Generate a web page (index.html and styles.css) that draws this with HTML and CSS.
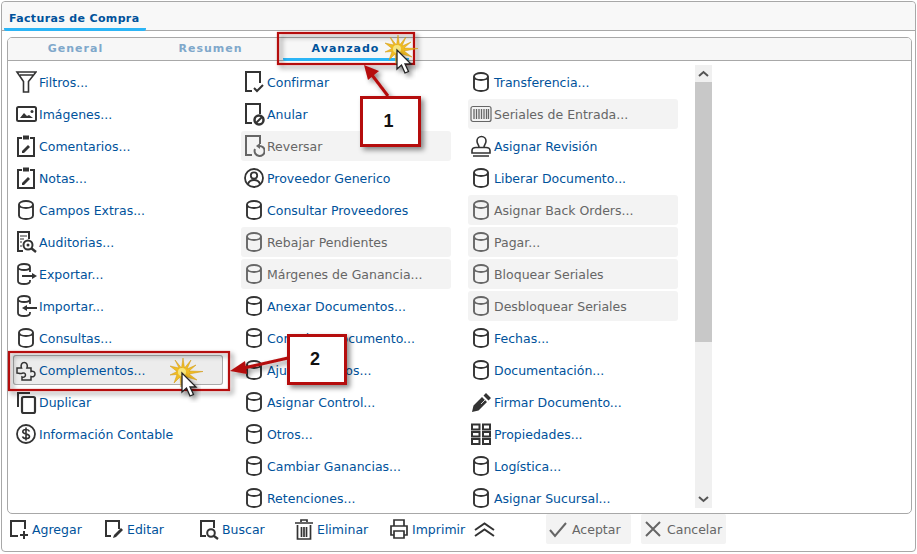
FILE: index.html
```html
<!DOCTYPE html>
<html lang="es">
<head>
<meta charset="utf-8">
<title>Facturas de Compra</title>
<link rel="stylesheet" href="styles.css">
</head>
<body>
<svg class="defs" width="0" height="0" aria-hidden="true">
  <defs>
    <symbol id="db" viewBox="0 0 16 20"><path d="M1 4.500C1 2.500 4 1 8 1s7 1.500 7 3.500v11c0 2-3 3.500-7 3.500s-7-1.500-7-3.500zM1 4.500c0 2 3 3.500 7 3.500s7-1.500 7-3.500" fill="none" stroke="currentColor" stroke-width="1.900"/></symbol>
  </defs>
</svg>
<div class="window">
  <div class="head"><div class="head-tab">Facturas de Compra</div></div>
  <div class="body">
    <div class="panel">
      <div class="tabs">
        <div class="tab">General</div>
        <div class="tab">Resumen</div>
        <div class="tab active">Avanzado</div>
      </div>
      <div class="content">
        <div class="list">
          <div class="col">
            <a class="item"><svg class="ic" viewBox="0 0 22 24"><path d="M2 2h19l-7.500 9.500V22h-5V11.500zM5 5h13" fill="none" stroke="currentColor" stroke-width="1.600"/></svg><span>Filtros...</span></a>
            <a class="item"><svg class="ic" viewBox="0 0 22 24"><rect x="2" y="5" width="19" height="14" rx="1.500" fill="none" stroke="currentColor" stroke-width="2"/><path d="M5 16l4-5 3 3 2-1 4 3z" fill="currentColor"/><circle cx="17" cy="9.500" r="1.500" fill="currentColor"/></svg><span>Imágenes...</span></a>
            <a class="item"><svg class="ic" viewBox="0 0 22 24"><path d="M7 4H3v18h16V4h-4" fill="none" stroke="currentColor" stroke-width="2"/><rect x="8" y="1.500" width="6" height="4" fill="currentColor"/><path d="M7 17l6-6 2 2-6 6H7z" fill="currentColor"/></svg><span>Comentarios...</span></a>
            <a class="item"><svg class="ic" viewBox="0 0 22 24"><path d="M7 4H3v18h16V4h-4" fill="none" stroke="currentColor" stroke-width="2"/><rect x="8" y="1.500" width="6" height="4" fill="currentColor"/><path d="M7 17l6-6 2 2-6 6H7z" fill="currentColor"/></svg><span>Notas...</span></a>
            <a class="item"><svg class="ic db"><use href="#db"/></svg><span>Campos Extras...</span></a>
            <a class="item"><svg class="ic" viewBox="0 0 22 24"><path d="M8 21H3V2h11v7" fill="none" stroke="currentColor" stroke-width="2"/><path d="M5 6h7M5 9h4M5 12h2M5 16h2" stroke="currentColor" stroke-width="1.200"/><circle cx="13" cy="15" r="4.500" fill="none" stroke="currentColor" stroke-width="2"/><circle cx="13" cy="15" r="1.500" fill="currentColor"/><path d="M16 18l5 4" stroke="currentColor" stroke-width="2.400"/></svg><span>Auditorias...</span></a>
            <a class="item"><svg class="ic" viewBox="0 0 22 24"><path d="M3 5c0-2 2.500-3 6-3s6 1 6 3c0 2-2.500 3-6 3S3 7 3 5zM3 5v14c0 2 2.500 3 6 3s6-1 6-3v-1M15 5v5" fill="none" stroke="currentColor" stroke-width="1.800"/><path d="M7 14h12" stroke="currentColor" stroke-width="2"/><path d="M17 11l5 3-5 3z" fill="currentColor"/></svg><span>Exportar...</span></a>
            <a class="item"><svg class="ic" viewBox="0 0 22 24"><path d="M3 5c0-2 2.500-3 6-3s6 1 6 3c0 2-2.500 3-6 3S3 7 3 5zM3 5v14c0 2 2.500 3 6 3s6-1 6-3v-1M15 5v5" fill="none" stroke="currentColor" stroke-width="1.800"/><path d="M10 14h12" stroke="currentColor" stroke-width="2"/><path d="M12 11l-5 3 5 3z" fill="currentColor"/></svg><span>Importar...</span></a>
            <a class="item"><svg class="ic db"><use href="#db"/></svg><span>Consultas...</span></a>
            <a class="item hover"><svg class="ic" viewBox="0 0 22 24"><path d="M2 10h4.500c-1.200-3 .3-5.500 2.700-5.500s3.900 2.500 2.700 5.500H16v3.500c2.200-.8 4 .5 4 2.500s-1.800 3.300-4 2.500V22H7v-3c1.800.8 3.500-.3 3.500-2S8.800 14.500 7 15.200c-2 .5-3 0-5-.2z" fill="none" stroke="currentColor" stroke-width="1.500"/></svg><span>Complementos...</span></a>
            <a class="item"><svg class="ic" viewBox="0 0 22 24"><path d="M3 17V3h12" fill="none" stroke="currentColor" stroke-width="2"/><rect x="7" y="7" width="13" height="16" rx="1.500" fill="none" stroke="currentColor" stroke-width="2.200"/></svg><span>Duplicar</span></a>
            <a class="item"><svg class="ic" viewBox="0 0 22 24"><circle cx="11" cy="12" r="9" fill="none" stroke="currentColor" stroke-width="1.800"/><path d="M14.500 9.500c-.5-1.300-2-2-3.500-2-2 0-3.200 1-3.200 2.200C7.800 12.800 14.500 11.200 14.500 14.400 14.500 15.800 13 16.500 11 16.500c-1.500 0-3-.5-3.500-2M11 5.500v13" fill="none" stroke="currentColor" stroke-width="1.600"/></svg><span>Información Contable</span></a>
          </div>
          <div class="col">
            <a class="item"><svg class="ic" viewBox="0 0 22 24"><path d="M9 21H3V2h14v11" fill="none" stroke="currentColor" stroke-width="2"/><path d="M11 18l3 3 6-6" fill="none" stroke="currentColor" stroke-width="2"/></svg><span>Confirmar</span></a>
            <a class="item"><svg class="ic" viewBox="0 0 22 24"><path d="M9 21H3V2h14v10" fill="none" stroke="currentColor" stroke-width="2"/><circle cx="16" cy="18" r="4.500" fill="none" stroke="currentColor" stroke-width="2.500"/><path d="M13 21l6-6" stroke="currentColor" stroke-width="2"/></svg><span>Anular</span></a>
            <a class="item off"><svg class="ic" viewBox="0 0 22 24"><path d="M9 21H3V2h14v8" fill="none" stroke="currentColor" stroke-width="2"/><path d="M12 15a5 5 0 1 0 4-3" fill="none" stroke="currentColor" stroke-width="2"/><path d="M17 9v6l-4-3z" fill="currentColor"/></svg><span>Reversar</span></a>
            <a class="item"><svg class="ic" viewBox="0 0 22 24"><circle cx="11" cy="12" r="9" fill="none" stroke="currentColor" stroke-width="1.800"/><circle cx="11" cy="9.500" r="3.200" fill="none" stroke="currentColor" stroke-width="1.800"/><path d="M5 18c1-3 3-4 6-4s5 1 6 4" fill="none" stroke="currentColor" stroke-width="1.800"/></svg><span>Proveedor Generico</span></a>
            <a class="item"><svg class="ic db"><use href="#db"/></svg><span>Consultar Proveedores</span></a>
            <a class="item off"><svg class="ic db"><use href="#db"/></svg><span>Rebajar Pendientes</span></a>
            <a class="item off"><svg class="ic db"><use href="#db"/></svg><span>Márgenes de Ganancia...</span></a>
            <a class="item"><svg class="ic db"><use href="#db"/></svg><span>Anexar Documentos...</span></a>
            <a class="item"><svg class="ic db"><use href="#db"/></svg><span>Consultar Documento...</span></a>
            <a class="item"><svg class="ic db"><use href="#db"/></svg><span>Ajustar Precios...</span></a>
            <a class="item"><svg class="ic db"><use href="#db"/></svg><span>Asignar Control...</span></a>
            <a class="item"><svg class="ic db"><use href="#db"/></svg><span>Otros...</span></a>
            <a class="item"><svg class="ic db"><use href="#db"/></svg><span>Cambiar Ganancias...</span></a>
            <a class="item"><svg class="ic db"><use href="#db"/></svg><span>Retenciones...</span></a>
          </div>
          <div class="col">
            <a class="item"><svg class="ic db"><use href="#db"/></svg><span>Transferencia...</span></a>
            <a class="item off"><svg class="ic" viewBox="0 0 22 24"><rect x="1" y="4.500" width="20" height="15" rx="2" fill="none" stroke="currentColor" stroke-width="1.200"/><path d="M4 7v10M6.500 7v10M9 7v10M11.500 7v10M14 7v10M16.500 7v10M18.500 7v10" stroke="currentColor" stroke-width="1.300"/></svg><span>Seriales de Entrada...</span></a>
            <a class="item"><svg class="ic" viewBox="0 0 22 24"><path d="M9 13c0-2-2-3-2-6a4.500 4.500 0 0 1 9 0c0 3-2 4-2 6M2 16.500c0-2 2-3 4-3h10c2 0 4 1 4 3V19H2zM3 22h16" fill="none" stroke="currentColor" stroke-width="1.600"/></svg><span>Asignar Revisión</span></a>
            <a class="item"><svg class="ic db"><use href="#db"/></svg><span>Liberar Documento...</span></a>
            <a class="item off"><svg class="ic db"><use href="#db"/></svg><span>Asignar Back Orders...</span></a>
            <a class="item off"><svg class="ic db"><use href="#db"/></svg><span>Pagar...</span></a>
            <a class="item off"><svg class="ic db"><use href="#db"/></svg><span>Bloquear Seriales</span></a>
            <a class="item off"><svg class="ic db"><use href="#db"/></svg><span>Desbloquear Seriales</span></a>
            <a class="item"><svg class="ic db"><use href="#db"/></svg><span>Fechas...</span></a>
            <a class="item"><svg class="ic db"><use href="#db"/></svg><span>Documentación...</span></a>
            <a class="item"><svg class="ic" viewBox="0 0 22 24"><path d="M2 22l1.500-6.500L12 7l5 5-8.500 8.500zM13.500 5.500L16 3l5 5-2.500 2.500z" fill="currentColor"/><path d="M16 9l-5 5" stroke="#fff" stroke-width=".8"/></svg><span>Firmar Documento...</span></a>
            <a class="item"><svg class="ic" viewBox="0 0 22 24"><path d="M2 2.500h7.500v5H2zM13 2.500h7v5h-7zM2 10h7.500v4.500H2zM13 10h7v4.500h-7zM2 17h7.500v5H2zM13 17h7v5h-7z" fill="none" stroke="currentColor" stroke-width="2"/></svg><span>Propiedades...</span></a>
            <a class="item"><svg class="ic db"><use href="#db"/></svg><span>Logística...</span></a>
            <a class="item"><svg class="ic db"><use href="#db"/></svg><span>Asignar Sucursal...</span></a>
          </div>
        </div>
        <div class="scrollbar">
          <div class="sb-btn"><svg width="11" height="7" viewBox="0 0 11 7"><path d="M1 6l4.500-4L10 6" fill="none" stroke="#555" stroke-width="2"/></svg></div>
          <div class="sb-thumb"></div>
          <div class="sb-track"></div>
          <div class="sb-btn"><svg width="11" height="7" viewBox="0 0 11 7"><path d="M1 1l4.500 4L10 1" fill="none" stroke="#555" stroke-width="2"/></svg></div>
        </div>
      </div>
    </div>
    <div class="footer">
      <a class="tool"><svg class="ti" viewBox="0 0 20 22"><path d="M9 18H2V3h14v8M15 13v8M11 17h8" fill="none" stroke="currentColor" stroke-width="2"/></svg><span>Agregar</span></a>
      <a class="tool"><svg class="ti" viewBox="0 0 20 22"><path d="M7 18H2V3h13v8" fill="none" stroke="currentColor" stroke-width="2"/><path d="M9 20l1-3 7-7 2 2-7 7z" fill="currentColor"/></svg><span>Editar</span></a>
      <a class="tool"><svg class="ti" viewBox="0 0 20 22"><path d="M7 18H2V3h13v7" fill="none" stroke="currentColor" stroke-width="2"/><circle cx="12" cy="15" r="3.800" fill="none" stroke="currentColor" stroke-width="2"/><path d="M15 18l4 3" stroke="currentColor" stroke-width="2.200"/></svg><span>Buscar</span></a>
      <a class="tool"><svg class="ti" viewBox="0 0 20 22"><path d="M1 5h18M7 4V2h6v2M3.500 7v14h13V7M7.500 9v10M10 9v10M12.500 9v10" fill="none" stroke="currentColor" stroke-width="1.700"/></svg><span>Eliminar</span></a>
      <a class="tool"><svg class="ti" viewBox="0 0 20 22"><path d="M5 8V2h10v6M5 17H2V8h16v9h-3M5 13h10v7H5z" fill="none" stroke="currentColor" stroke-width="1.700"/></svg><span>Imprimir</span></a>
      <svg class="chev" viewBox="0 0 21 15"><path d="M1 8l9.500-6.500L20 8M1 14l9.500-6.500L20 14" fill="none" stroke="currentColor" stroke-width="2"/></svg>
      <a class="btn first"><svg class="bi" viewBox="0 0 18 18"><path d="M1 10l5 6L17 3" fill="none" stroke="currentColor" stroke-width="2"/></svg><span>Aceptar</span></a>
      <a class="btn"><svg class="bi" viewBox="0 0 18 18"><path d="M2 2l14 14M16 2L2 16" fill="none" stroke="currentColor" stroke-width="2"/></svg><span>Cancelar</span></a>
    </div>
  </div>
</div>

<svg class="overlay" viewBox="0 0 917 554" width="917" height="554" aria-hidden="true">
  <defs>
    <filter id="sh" x="-20%" y="-20%" width="150%" height="150%"><feDropShadow dx="3" dy="3" stdDeviation="2.500" flood-color="#000" flood-opacity=".45"/></filter>
    <g id="star">
      <path d="M1-14L2.500-4 9-12 5-3 14-7 7-1 21-.5 7 2 15 8 4.500 5 8 14 1 6-1 15-2 5-8 11-5 2.500-12 3-5-.5-12-6-3-4-7-12-.5-4z" fill="#f0bd22" stroke="#cf9410" stroke-width=".5"/>
      <circle r="4" fill="#f6e57e"/>
    </g>
    <path id="cur" d="M0 0V19L4.500 15 8 23 11.500 21.500 8 14H14z" fill="#fff" stroke="#222" stroke-width="1.300" filter="url(#sh)"/>
  </defs>
  <rect x="278" y="33" width="136" height="31" fill="none" stroke="#b50d0d" stroke-width="2.200" filter="url(#sh)"/>
  <rect x="9" y="352" width="220" height="38" fill="none" stroke="#b50d0d" stroke-width="2.200" filter="url(#sh)"/>
  <g filter="url(#sh)">
    <path d="M388 96L372 75" stroke="#b50d0d" stroke-width="3"/>
    <path d="M364 65L379 71 368 80z" fill="#b50d0d"/>
  </g>
  <g filter="url(#sh)">
    <path d="M288 358L244 368" stroke="#b50d0d" stroke-width="3"/>
    <path d="M230 371L245 361 247 374z" fill="#b50d0d"/>
  </g>
  <use href="#star" x="397" y="49"/>
  <use href="#cur" x="397" y="50"/>
  <use href="#star" x="182" y="372"/>
  <use href="#cur" x="182" y="373"/>
</svg>
<div class="num one">1</div>
<div class="num two">2</div>
</body>
</html>
```
FILE: styles.css
```css
* { box-sizing: border-box; }
html, body { margin: 0; padding: 0; }
body {
  width: 917px;
  height: 554px;
  background: #fff;
  font-family: "DejaVu Sans", sans-serif;
  font-size: 12.5px;
  color: #00529b;
  overflow: hidden;
  position: relative;
}
.defs { position: absolute; }
.window {
  margin: 1px 0 0 1px;
  width: 915px;
  height: 551px;
  border: 1px solid #a8a8a8;
  border-radius: 4px;
  display: flex;
  flex-direction: column;
}
.head {
  height: 29px;
  flex: none;
  background: #f8f8f8;
  border-bottom: 1px solid #a8a8a8;
  padding-left: 2px;
  border-radius: 4px 4px 0 0;
}
.head-tab {
  width: 142px;
  height: 29px;
  padding: 10px 0 0 5px;
  font-weight: 700;
  font-size: 11px;
  letter-spacing: .35px;
  border-bottom: 3px solid #2bb5f6;
  border-radius: 0 0 2px 2px;
  white-space: nowrap;
}
.body {
  flex: 1;
  padding: 6px 3px 0 5px;
  display: flex;
  flex-direction: column;
}
.panel {
  height: 477px;
  flex: none;
  border: 1px solid #a8a8a8;
  border-radius: 5px;
  display: flex;
  flex-direction: column;
  overflow: hidden;
}
.tabs {
  height: 23px;
  flex: none;
  display: flex;
  background: #f7f7f7;
  border-bottom: 1px solid #a8a8a8;
}
.tab {
  width: 135px;
  padding-top: 4px;
  text-align: center;
  font-weight: 700;
  font-size: 11px;
  letter-spacing: 1px;
  color: #7fa8cb;
}
.tab.active {
  color: #00529b;
  margin: 0 4.500px;
  width: 126px;
  border-bottom: 3px solid #2bb5f6;
  border-radius: 2px;
  height: 23px;
}
.content {
  flex: 1;
  display: flex;
  min-height: 0;
  padding: 4px 0 5px 5px;
  align-items: stretch;
}
.list {
  width: 672px;
  flex: none;
  display: flex;
  gap: 18px;
  overflow: hidden;
  padding-top: 2px;
}
.col {
  width: 210px;
  flex: none;
  display: flex;
  flex-direction: column;
  gap: 2px;
}
.col:last-child { margin-left: -1px; }
.item {
  height: 30px;
  flex: none;
  display: flex;
  align-items: center;
  border-radius: 3px;
  padding-left: 2px;
  color: #00529b;
  white-space: nowrap;
}
.item .ic { color: #333; }
.item.off { background: #f3f3f3; color: #666; }
.item.off .ic { color: #666; }
.item.hover { background: #ececec; box-shadow: inset 0 0 0 1px #aaa; }
.ic {
  width: 22px;
  height: 24px;
  flex: none;
  margin-right: 2px;
}
.ic.db { padding: 2px 3px; }
.scrollbar {
  width: 17px;
  flex: none;
  display: flex;
  flex-direction: column;
  background: #f0f0f0;
  margin-left: 10px;
}
.sb-btn {
  height: 17px;
  flex: none;
  display: flex;
  align-items: center;
  justify-content: center;
}
.sb-thumb { height: 260px; flex: none; background: #c8c8c8; }
.sb-track { flex: 1; }
.footer {
  flex: 1;
  display: flex;
  align-items: center;
  padding: 0 0 7px 2px;
}
.tool {
  width: 95px;
  flex: none;
  display: flex;
  align-items: center;
  gap: 3px;
  height: 28px;
}
.tool:nth-child(5) { width: 85px; }
.ti { width: 20px; height: 22px; flex: none; color: #333; }
.chev { width: 21px; height: 15px; flex: none; color: #333; margin-right: 51px; }
.btn {
  width: 85px;
  height: 30px;
  flex: none;
  display: flex;
  align-items: center;
  padding-left: 3px;
  gap: 5px;
  background: #f3f3f3;
  color: #666;
  border-radius: 2px;
  margin-right: 10px;
}
.bi { width: 18px; height: 18px; flex: none; }
.overlay { position: absolute; left: 0; top: 0; pointer-events: none; }
.num {
  position: absolute;
  height: 51px;
  padding-right: 4px;
  background: #fff;
  border: 3px solid #b50d0d;
  box-shadow: 3px 3px 5px rgba(0,0,0,.45);
  font-family: "Liberation Sans", sans-serif;
  font-weight: 700;
  font-size: 18px;
  color: #111;
  display: flex;
  align-items: center;
  justify-content: center;
}
.num.one { left: 360px; top: 96px; width: 61px; }
.num.two { left: 287px; top: 334px; width: 60px; }
```
